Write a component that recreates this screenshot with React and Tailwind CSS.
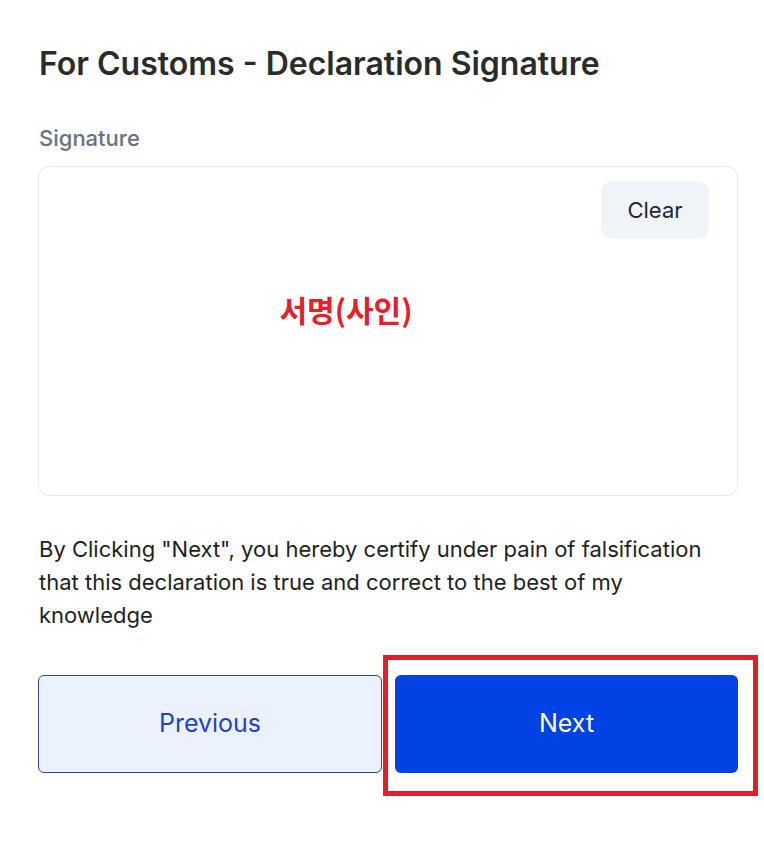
export default function App() {
  return (
    <div className="min-h-[848px] bg-white" style={{ fontFamily: "Inter, 'Noto Sans CJK KR', sans-serif" }}>
      <div className="w-[700px] ml-[38px] pt-[44px]">
        <h1 className="text-[32px] leading-[40px] font-semibold text-[#2b2b2b] ml-px">
          For Customs - Declaration Signature
        </h1>

        <div className="mt-[40px] ml-px text-[22px] leading-[28px] font-medium text-[#6b7280]">Signature</div>

        {/* signature pad */}
        <div className="relative mt-[14px] h-[330px] rounded-xl border border-[#e5e7eb] bg-white">
          <button className="absolute right-[28px] top-[14px] h-[58px] w-[108px] rounded-xl bg-[#f0f3f8] text-[22px] text-[#1f2937]">
            Clear
          </button>
          <div className="flex h-full items-center justify-center pr-[84px] pb-[44px]">
            <span
              className="text-[30px] font-bold text-[#e3202c]"
              style={{ fontFamily: "'Noto Sans CJK KR', sans-serif" }}
            >
              서명(사인)
            </span>
          </div>
        </div>

        <p className="mt-[37px] ml-px max-w-[680px] text-[22px] leading-[33px] text-[#1f1f1f]">
          By Clicking "Next", you hereby certify under pain of falsification that this declaration is true and correct
          to the best of my knowledge
        </p>

        <div className="mt-[43px] flex gap-[13px]">
          <button className="h-[98px] w-[345px] rounded-md border border-[#2d4a8a] bg-[#ecf2fd] text-[25px] text-[#1d45c4]">
            Previous
          </button>
          <div className="relative">
            <button className="h-[98px] w-[343px] rounded-md bg-[#0042e3] text-[25px] text-white">Next</button>
            {/* highlight annotation */}
            <div className="pointer-events-none absolute -left-[12px] -top-[20px] h-[141px] w-[375px] border-[5px] border-[#e11f2b]" />
          </div>
        </div>
      </div>
    </div>
  )
}
